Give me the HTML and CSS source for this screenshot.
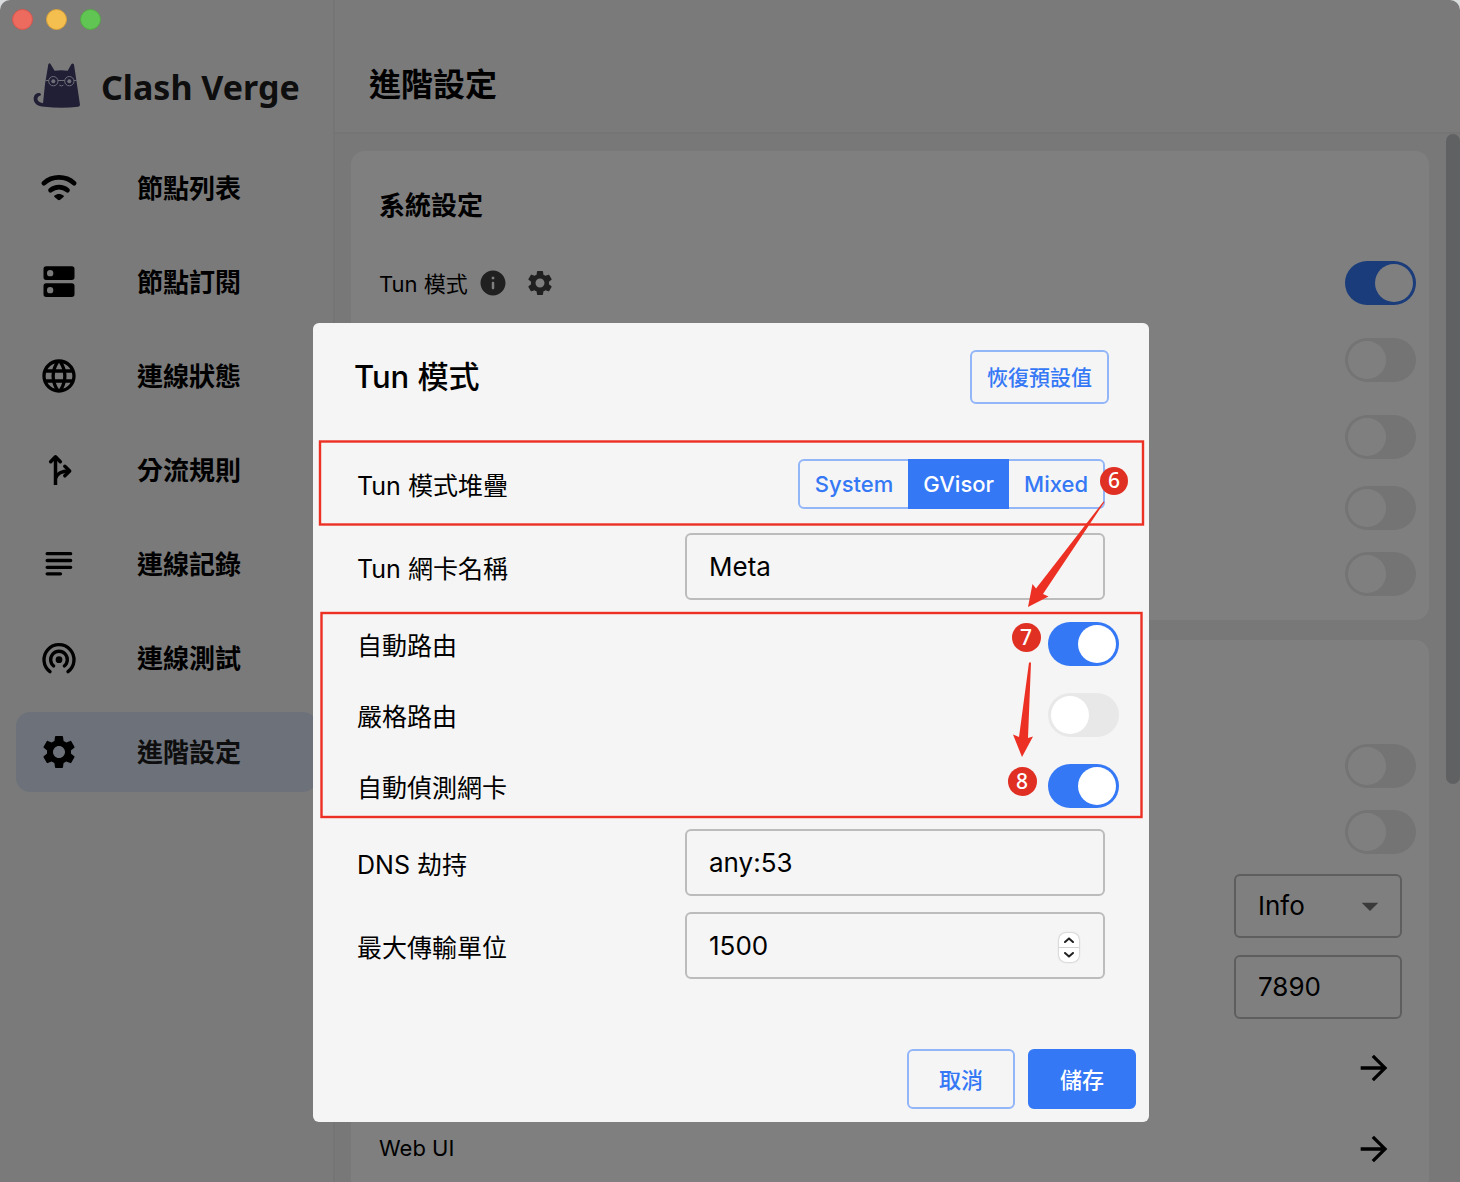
FILE: index.html
```html
<!DOCTYPE html>
<html lang="zh-Hant">
<head>
  <meta charset="UTF-8" />
  <meta name="viewport" content="width=device-width, initial-scale=1.0"/>
  <title>Clash Verge</title>
  <link rel="stylesheet" href="styles.css">
</head>
<body>

  <div class="window">
    <div class="traffic-lights">
      <span class="light red"></span>
      <span class="light yellow"></span>
      <span class="light green"></span>
    </div>

    <aside class="sidebar">
      <div class="logo">
        <svg class="logo-cat" viewBox="98 183 144 140">
          <path fill="#403e6a" d="M144 189Q148 184 151 189L163 209Q182 205 202 209L213 189Q217 184 221 190L239 311Q239 316 234 317Q183 323 132 317C110 316 100 305 100 293C100 281 108 274 119 276Q125 279 119 284C108 287 107 303 128 306Q132 250 144 189z"/>
          <g fill="none" stroke="#dcdcf0" stroke-width="3">
            <circle cx="159" cy="240" r="14"/>
            <circle cx="207" cy="240" r="14"/>
            <path d="M173 238H193M136 238H145M221 238H229M177 252Q183 257 189 252"/>
          </g>
          <circle cx="159" cy="240" r="6" fill="#dcdcf0"/>
          <circle cx="207" cy="240" r="6" fill="#dcdcf0"/>
        </svg>
        <span class="logo-text">Clash Verge</span>
      </div>

      <nav class="nav">
        <a class="nav-item" href="#">
          <svg class="nav-icon" viewBox="0 0 24 24">
            <g fill="none" stroke="#000" stroke-width="2.8" stroke-linecap="round">
              <path d="M2.9 9.1C8 4.5 16 4.5 21.1 9.1"/>
              <path d="M6.9 13.3C9.8 10.8 14.2 10.8 17.1 13.3"/>
            </g>
            <path d="M9.3 16.5C10.8 15.2 13.2 15.2 14.7 16.5Q15.2 17 14.7 17.4L12.7 19.1Q12 19.6 11.3 19.1L9.3 17.4Q8.8 17 9.3 16.5z"/>
          </svg>
          <span>節點列表</span>
        </a>
        <a class="nav-item" href="#">
          <svg class="nav-icon" viewBox="0 0 24 24">
            <path fill-rule="evenodd" d="M4.3 2.6H19.7Q21.3 2.6 21.3 4.2V9.2Q21.3 10.8 19.7 10.8H4.3Q2.7 10.8 2.7 9.2V4.2Q2.7 2.6 4.3 2.6zM6.7 4.8a1.9 1.9 0 1 0 0 3.8a1.9 1.9 0 1 0 0-3.8zM4.3 12.7H19.7Q21.3 12.7 21.3 14.3V19.4Q21.3 21 19.7 21H4.3Q2.7 21 2.7 19.4V14.3Q2.7 12.7 4.3 12.7zM6.7 15a1.9 1.9 0 1 0 0 3.8a1.9 1.9 0 1 0 0-3.8z"/>
          </svg>
          <span>節點訂閱</span>
        </a>
        <a class="nav-item" href="#">
          <svg class="nav-icon" viewBox="0 0 24 24">
            <path d="M11.99 2C6.47 2 2 6.48 2 12s4.47 10 9.99 10C17.52 22 22 17.52 22 12S17.52 2 11.99 2zm6.93 6h-2.95c-.32-1.25-.78-2.45-1.38-3.56 1.84.63 3.37 1.91 4.33 3.56zM12 4.04c.83 1.2 1.48 2.53 1.91 3.96h-3.82c.43-1.43 1.08-2.76 1.91-3.96zM4.26 14C4.1 13.36 4 12.69 4 12s.1-1.36.26-2h3.38c-.08.66-.14 1.32-.14 2 0 .68.06 1.34.14 2H4.26zm.82 2h2.95c.32 1.25.78 2.45 1.38 3.56-1.84-.63-3.37-1.9-4.33-3.56zm2.95-8H5.08c.96-1.66 2.49-2.93 4.33-3.56C8.81 5.55 8.35 6.75 8.03 8zM12 19.96c-.83-1.2-1.48-2.53-1.91-3.96h3.82c-.43 1.43-1.08 2.76-1.91 3.96zM14.34 14H9.66c-.09-.66-.16-1.32-.16-2 0-.68.07-1.35.16-2h4.68c.09.65.16 1.32.16 2 0 .68-.07 1.34-.16 2zm.25 5.56c.6-1.11 1.06-2.31 1.38-3.56h2.95c-.96 1.65-2.49 2.93-4.33 3.56zM16.36 14c.08-.66.14-1.32.14-2 0-.68-.06-1.34-.14-2h3.38c.16.64.26 1.31.26 2s-.1 1.36-.26 2h-3.38z"/>
          </svg>
          <span>連線狀態</span>
        </a>
        <a class="nav-item" href="#">
          <svg class="nav-icon" viewBox="0 0 24 24">
            <g fill="none" stroke="#000" stroke-width="2.1" stroke-linecap="round" stroke-linejoin="round">
              <path stroke-linecap="butt" d="M9.9 4.5V21"/>
              <path d="M7 7L9.9 4.1L12.8 7"/>
              <path d="M15.5 9.8L18.4 12.6L15.5 15.5"/>
              <path stroke-linecap="butt" d="M9.9 17C10.8 14 13 12.6 18 12.6"/>
            </g>
          </svg>
          <span>分流規則</span>
        </a>
        <a class="nav-item" href="#">
          <svg class="nav-icon" viewBox="0 0 24 24">
            <path fill="none" stroke="#000" stroke-width="2" stroke-linecap="round" d="M4.9 5.8H19M4.9 9.9H19M4.9 14H19M4.9 17.9H12.9"/>
          </svg>
          <span>連線記錄</span>
        </a>
        <a class="nav-item" href="#">
          <svg class="nav-icon" viewBox="0 0 24 24">
            <g fill="none" stroke="#000" stroke-width="2" stroke-linecap="round">
              <path d="M6.6 20.2A9 9 0 1 1 17.4 20.2"/>
              <path d="M8.8 16.8A5 5 0 1 1 15.2 16.8"/>
            </g>
            <circle cx="12" cy="13" r="2"/>
          </svg>
          <span>連線測試</span>
        </a>
        <a class="nav-item active" href="#">
          <svg class="nav-icon" viewBox="0 0 24 24">
            <path id="gear" d="M19.14 12.94c.04-.3.06-.61.06-.94 0-.32-.02-.64-.07-.94l2.03-1.58c.18-.14.23-.41.12-.61l-1.92-3.32c-.12-.22-.37-.29-.59-.22l-2.39.96c-.5-.38-1.03-.7-1.62-.94l-.36-2.54c-.04-.24-.24-.41-.48-.41h-3.84c-.24 0-.43.17-.47.41l-.36 2.54c-.59.24-1.13.57-1.62.94l-2.39-.96c-.22-.08-.47 0-.59.22L2.74 8.87c-.12.21-.08.47.12.61l2.03 1.58c-.05.3-.09.63-.09.94s.02.64.07.94l-2.03 1.58c-.18.14-.23.41-.12.61l1.92 3.32c.12.22.37.29.59.22l2.39-.96c.5.38 1.03.7 1.62.94l.36 2.54c.05.24.24.41.48.41h3.84c.24 0 .44-.17.47-.41l.36-2.54c.59-.24 1.13-.56 1.62-.94l2.39.96c.22.08.47 0 .59-.22l1.92-3.32c.12-.22.07-.47-.12-.61l-2.01-1.58zM12 15.6c-1.98 0-3.6-1.62-3.6-3.6s1.62-3.6 3.6-3.6 3.6 1.62 3.6 3.6-1.62 3.6-3.6 3.6z"/>
          </svg>
          <span>進階設定</span>
        </a>
      </nav>
    </aside>

    <main class="main">
      <header class="page-header">
        <h1>進階設定</h1>
      </header>

      <div class="content">
        <section class="card">
          <h2>系統設定</h2>
          <div class="row tall">
            <label for="tun">Tun 模式</label>
            <button class="icon-btn" aria-label="說明">
              <svg viewBox="0 0 24 24"><path d="M12 2C6.48 2 2 6.48 2 12s4.48 10 10 10 10-4.48 10-10S17.52 2 12 2zm0 15c-.55 0-1-.45-1-1v-4c0-.55.45-1 1-1s1 .45 1 1v4c0 .55-.45 1-1 1zm1-8h-2V7h2v2z"/></svg>
            </button>
            <button class="icon-btn settings" aria-label="設定">
              <svg viewBox="0 0 24 24"><use href="#gear"/></svg>
            </button>
            <input class="switch" type="checkbox" id="tun" checked>
          </div>
          <div class="row tall"><input class="switch" type="checkbox" aria-label="服務模式"></div>
          <div class="row tall"><input class="switch" type="checkbox" aria-label="系統代理"></div>
          <div class="row"><input class="switch" type="checkbox" aria-label="開機自啟"></div>
          <div class="row"><input class="switch" type="checkbox" aria-label="靜默啟動"></div>
        </section>

        <section class="card">
          <div class="card-head"></div>
          <div class="row"><input class="switch" type="checkbox" aria-label="區域網路"></div>
          <div class="row"><input class="switch" type="checkbox" aria-label="IPv6"></div>
          <div class="row field">
            <div class="select-box">
              <select class="box" aria-label="日誌等級">
                <option>Info</option>
              </select>
              <svg class="caret" viewBox="0 0 24 24"><path d="M7 10l5 5 5-5z"/></svg>
            </div>
          </div>
          <div class="row field"><input class="box" type="text" value="7890" aria-label="連接埠"></div>
          <div class="row field">
            <button class="arrow-btn" aria-label="外部控制">
              <svg viewBox="0 0 24 24"><path d="M12 4l-1.41 1.41L16.17 11H4v2h12.17l-5.58 5.59L12 20l8-8z"/></svg>
            </button>
          </div>
          <div class="row field">
            <span>Web UI</span>
            <button class="arrow-btn" aria-label="Web UI">
              <svg viewBox="0 0 24 24"><path d="M12 4l-1.41 1.41L16.17 11H4v2h12.17l-5.58 5.59L12 20l8-8z"/></svg>
            </button>
          </div>
        </section>
        <div class="scrollbar"></div>
      </div>
    </main>

    <div class="backdrop">
      <div class="modal" role="dialog" aria-labelledby="modalTitle">
        <div class="modal-header">
          <h2 id="modalTitle">Tun 模式</h2>
          <button class="btn btn-reset">恢復預設值</button>
        </div>

        <div class="modal-body">
          <div class="form-row">
            <span>Tun 模式堆疊</span>
            <div class="btn-group">
              <button>System</button>
              <button class="selected">GVisor</button>
              <button>Mixed</button>
            </div>
          </div>
          <div class="form-row">
            <label for="device">Tun 網卡名稱</label>
            <input class="box" type="text" id="device" value="Meta">
          </div>
          <div class="form-row short">
            <label for="autoRoute">自動路由</label>
            <input class="switch" type="checkbox" id="autoRoute" checked>
          </div>
          <div class="form-row short">
            <label for="strictRoute">嚴格路由</label>
            <input class="switch" type="checkbox" id="strictRoute">
          </div>
          <div class="form-row short">
            <label for="autoDetect">自動偵測網卡</label>
            <input class="switch" type="checkbox" id="autoDetect" checked>
          </div>
          <div class="form-row">
            <label for="dns">DNS 劫持</label>
            <input class="box" type="text" id="dns" value="any:53">
          </div>
          <div class="form-row">
            <label for="mtu">最大傳輸單位</label>
            <div class="number-box">
              <input class="box" type="number" id="mtu" value="1500">
              <div class="stepper">
                <button aria-label="增加" onclick="mtu.stepUp()"><svg viewBox="0 0 10 6"><path d="M1 5L5 1.4L9 5"/></svg></button>
                <button aria-label="減少" onclick="mtu.stepDown()"><svg viewBox="0 0 10 6"><path d="M1 1L5 4.6L9 1"/></svg></button>
              </div>
            </div>
          </div>
        </div>

        <div class="modal-actions">
          <button class="btn">取消</button>
          <button class="btn btn-primary">儲存</button>
        </div>

        <!-- step markers -->
        <svg class="marks" viewBox="0 0 836 799">
          <g fill="none" stroke="#ed3024" stroke-width="2.4">
            <rect x="7" y="118.500" width="823" height="83"/>
            <rect x="8.500" y="290" width="820" height="204"/>
          </g>
          <g fill="#ed3024">
            <path d="M715 284L719.500 261L723 265.500L790.500 178.500L791.500 179L730 271L735.500 273.500z"/>
            <path d="M709 434L700 411.500L706 414L716 339.500H718L715 415L720 413.500z"/>
          </g>
          <g fill="#e02f23">
            <circle cx="801" cy="158" r="14"/>
            <circle cx="713.500" cy="314.500" r="14.500"/>
            <circle cx="709.500" cy="458.500" r="14.500"/>
          </g>
          <g class="mark-num">
            <text x="801" y="165">6</text>
            <text x="713" y="322">7</text>
            <text x="709" y="466">8</text>
          </g>
        </svg>
      </div>
    </div>
  </div>

</body>
</html>
```
FILE: styles.css
```css
* {
  box-sizing: border-box;
}

body {
  margin: 0;
  font-family: Inter, "Noto Sans CJK TC", sans-serif;
  font-size: 22px;
  color: #000;
  background-color: #d9dddd;
}

h1, h2 {
  margin: 0;
}

button, input, select {
  font-family: inherit;
  margin: 0;
}

button {
  cursor: pointer;
}

.window {
  position: relative;
  display: flex;
  height: 100vh;
  overflow: hidden;
  border-radius: 10px 10px 0 0;
  background-color: #f5f5f5;
}

.traffic-lights {
  position: absolute;
  top: 9px;
  left: 12px;
  z-index: 3;
  display: flex;
  gap: 13px;
}

.light {
  width: 21px;
  height: 21px;
  border-radius: 50%;
  border: 1px solid #d9544c;
  background-color: #ed6a5e;
}

.light.yellow {
  border-color: #d8a03a;
  background-color: #f5bf4f;
}

.light.green {
  border-color: #52a943;
  background-color: #61c554;
}

/* sidebar */
.sidebar {
  flex: 0 0 335px;
  padding: 62px 16px 0;
  border-right: 2px solid #ebebeb;
}

.logo {
  display: flex;
  align-items: center;
  gap: 20px;
  height: 46px;
  margin: 0 0 40px 17px;
}

.logo-cat {
  width: 48px;
  height: 47px;
}

.logo-text {
  padding-top: 4px;
  font-family: "Noto Sans", sans-serif;
  font-size: 34px;
  font-weight: 700;
  line-height: 46px;
  white-space: nowrap;
  color: #1c1c1c;
}

.nav {
  display: flex;
  flex-direction: column;
  gap: 14px;
}

.nav-item {
  display: flex;
  align-items: center;
  gap: 58px;
  height: 80px;
  padding-left: 23px;
  border-radius: 14px;
  font-size: 26px;
  font-weight: 700;
  color: #000;
  text-decoration: none;
}

.nav-item span {
  padding-bottom: 3px;
}

.nav-item.active {
  color: #1c1c1c;
  background-color: #dae3f5;
}

.nav-icon {
  width: 40px;
  height: 40px;
  fill: #000;
}

/* settings page */
.main {
  flex: 1;
  min-width: 0;
  display: flex;
  flex-direction: column;
}

.page-header {
  flex: 0 0 134px;
  padding: 61px 34px 0;
  border-bottom: 2px solid #ebebeb;
}

.page-header h1 {
  font-size: 32px;
  line-height: 48px;
}

.content {
  position: relative;
  flex: 1;
  min-height: 0;
  padding: 17px 31px 0 16px;
  overflow: hidden;
  background-color: #f0f0f0;
}

.card {
  margin-bottom: 20px;
  padding: 0 27px 13px 28px;
  border-radius: 14px;
  background-color: #fff;
}

.card h2 {
  padding-top: 35px;
  height: 93px;
  font-size: 26px;
  line-height: 40px;
}

.card-head {
  height: 93px;
}

.row {
  display: flex;
  align-items: center;
  height: 66px;
}

.row.tall {
  height: 77px;
}

.row.field {
  height: 81px;
}

.row label,
.row span {
  padding-bottom: 2px;
}

.row .switch,
.select-box,
.row > .box,
.arrow-btn {
  margin-left: auto;
}

.icon-btn {
  display: flex;
  margin-left: 10px;
  padding: 0;
  border: none;
  background: none;
}

.icon-btn.settings {
  margin-left: 17px;
}

.icon-btn svg {
  width: 30px;
  height: 30px;
  fill: #404040;
}

.arrow-btn {
  display: flex;
  padding: 8px;
  border: none;
  background: none;
}

.arrow-btn svg {
  width: 40px;
  height: 40px;
}

.scrollbar {
  position: absolute;
  top: 0;
  right: 0;
  width: 14px;
  height: 650px;
  border-radius: 7px;
  background-color: #c0c2c5;
}

/* controls */
.box {
  width: 420px;
  height: 67px;
  padding: 0 22px;
  border: 2px solid #bcbcbc;
  border-radius: 6px;
  font-size: 26px;
  color: #000;
  background: transparent;
  appearance: none;
}

.row .box {
  width: 168px;
  height: 64px;
}

.select-box {
  position: relative;
}

.select-box .box {
  display: block;
}

.caret {
  position: absolute;
  top: 12px;
  right: 12px;
  width: 40px;
  height: 40px;
  fill: #757575;
  pointer-events: none;
}

.switch {
  appearance: none;
  flex: none;
  display: flex;
  width: 71px;
  height: 44px;
  margin-right: -14px;
  padding: 3px;
  border-radius: 22px;
  background-color: #e8e8e8;
  cursor: pointer;
}

.switch::before {
  content: "";
  width: 38px;
  height: 38px;
  border-radius: 50%;
  background-color: #fff;
}

.switch:checked {
  justify-content: flex-end;
  background-color: #3478f6;
}

/* modal */
.backdrop {
  position: absolute;
  inset: 0;
  z-index: 2;
  display: flex;
  justify-content: center;
  align-items: flex-start;
  padding: 323px 32px 0 34px;
  background-color: rgba(0, 0, 0, 0.5);
}

.modal {
  position: relative;
  width: 100%;
  max-width: 836px;
  border-radius: 6px;
  background-color: #f5f5f5;
}

.modal-header {
  display: flex;
  justify-content: space-between;
  align-items: center;
  padding: 27px 40px 27px 41px;
}

.modal-header h2 {
  font-size: 31px;
  font-weight: 500;
  line-height: 48px;
}

.modal-body {
  padding: 11px 44px 49px;
}

.form-row {
  display: flex;
  justify-content: space-between;
  align-items: center;
  height: 83px;
  font-size: 25px;
}

.form-row.short {
  height: 71px;
}

.btn {
  width: 108px;
  height: 60px;
  padding: 0 0 2px;
  border: 2px solid #92b6f8;
  border-radius: 6px;
  font-size: 22px;
  font-weight: 500;
  color: #3478f6;
  background: transparent;
}

.btn-reset {
  width: 139px;
  height: 54px;
  font-size: 21px;
}

.btn-primary {
  border-color: #3478f6;
  color: #fff;
  background-color: #3478f6;
}

.btn-group {
  display: flex;
  height: 50px;
  border: 2px solid #92b6f8;
  border-radius: 6px;
}

.btn-group button {
  padding: 0 15px;
  border: none;
  font-size: 22px;
  font-weight: 500;
  color: #3478f6;
  background: transparent;
}

.btn-group .selected {
  margin: -2px 0;
  color: #fff;
  background-color: #3478f6;
}

.number-box {
  position: relative;
}

.number-box .box {
  display: block;
  appearance: textfield;
}

.number-box .box::-webkit-inner-spin-button {
  display: none;
}

.stepper {
  position: absolute;
  top: 21px;
  right: 26px;
  display: flex;
  flex-direction: column;
  gap: 1px;
  width: 20px;
  border-radius: 7px;
  overflow: hidden;
  background-color: #d4d4d4;
  box-shadow: 0 0 2px rgba(0, 0, 0, 0.4);
}

.stepper button {
  display: flex;
  justify-content: center;
  align-items: center;
  height: 14px;
  padding: 0;
  border: none;
  background-color: #fff;
}

.stepper svg {
  width: 10px;
  height: 6px;
  fill: none;
  stroke: #222;
  stroke-width: 2;
  stroke-linecap: round;
  stroke-linejoin: round;
}

.modal-actions {
  display: flex;
  justify-content: flex-end;
  gap: 13px;
  padding: 13px;
}

.marks {
  position: absolute;
  top: 0;
  right: 0;
  width: 836px;
  height: 799px;
  pointer-events: none;
}

.mark-num {
  font-family: "Noto Sans", sans-serif;
  font-size: 21px;
  font-weight: 500;
  fill: #fff;
  text-anchor: middle;
}
```
